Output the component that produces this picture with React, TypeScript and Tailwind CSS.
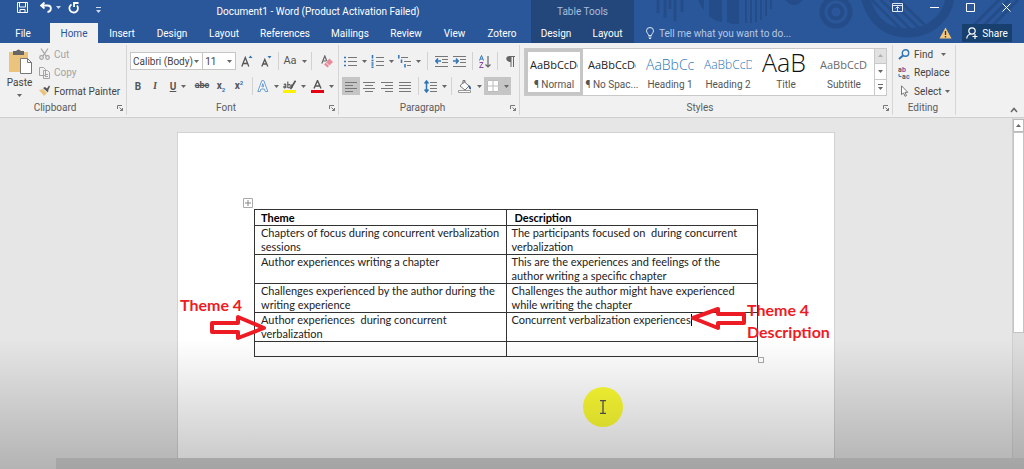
import React, { useState } from "react";

interface ThemeRow {
  theme: string;
  description: string;
  cursor?: boolean;
}

interface StyleItem {
  name: string;
  sample: string;
  className: string;
}

const TABS = [
  { name: "File", className: "w-[50px] pr-1" },
  { name: "Home", className: "w-12" },
  { name: "Insert", className: "w-12" },
  { name: "Design", className: "w-[52px]" },
  { name: "Layout", className: "w-[52px]" },
  { name: "References", className: "w-[70px]" },
  { name: "Mailings", className: "w-[60px]" },
  { name: "Review", className: "w-[52px]" },
  { name: "View", className: "w-[45px]" },
  { name: "Zotero", className: "w-[50px]" },
];

const STYLES: StyleItem[] = [
  { name: "¶ Normal", sample: "AaBbCcDc", className: "text-[11px] leading-[26px] text-[#222]" },
  { name: "¶ No Spac...", sample: "AaBbCcDc", className: "text-[11px] leading-[26px] text-[#222]" },
  { name: "Heading 1", sample: "AaBbCc", className: "text-[14px] leading-[26px] font-light text-[#2e74b5]" },
  { name: "Heading 2", sample: "AaBbCcD", className: "text-[12px] leading-[26px] font-light text-[#2e74b5]" },
  { name: "Title", sample: "AaB", className: "text-[25px] leading-[20px] font-light text-[#111]" },
  { name: "Subtitle", sample: "AaBbCcD", className: "text-[11px] leading-[26px] text-[#6a6a6a]" },
];

const ROWS: ThemeRow[] = [
  {
    theme: "Chapters of focus during concurrent verbalization sessions",
    description: "The participants focused on  during concurrent verbalization",
  },
  {
    theme: "Author experiences writing a chapter",
    description: "This are the experiences and feelings of the author writing a specific chapter",
  },
  {
    theme: "Challenges experienced by the author during the writing experience",
    description: "Challenges the author might have experienced while writing the chapter",
  },
  {
    theme: "Author experiences  during concurrent verbalization",
    description: "Concurrent verbalization experiences",
    cursor: true,
  },
];

function Caret({ className = "" }: { className?: string }) {
  return (
    <svg width="5" height="3" viewBox="0 0 5 3" className={`shrink-0 ${className}`}>
      <path d="M0 0h5L2.500 3z" fill="#666" />
    </svg>
  );
}

function Sep() {
  return <span className="mx-1 h-[18px] w-px shrink-0 bg-[#d2d2d2]" />;
}

function Tool({
  label,
  className = "",
  caret = false,
  children,
}: {
  label: string;
  className?: string;
  caret?: boolean;
  children: React.ReactNode;
}) {
  return (
    <button
      type="button"
      aria-label={label}
      className={`flex h-[18px] shrink-0 items-center justify-center gap-[5px] text-[#555] ${className}`}
    >
      {children}
      {caret && <Caret />}
    </button>
  );
}

function Group({
  name,
  className = "",
  launcher = true,
  children,
}: {
  name: string;
  className?: string;
  launcher?: boolean;
  children: React.ReactNode;
}) {
  return (
    <section className={`my-[2px] flex shrink-0 flex-col border-r border-[#d6d6d6] ${className}`}>
      <div className="h-[58px]">{children}</div>
      <div className="flex h-[14px] items-center">
        <h2 className="flex-1 pr-[7px] text-center leading-[14px] text-[#5c5c5c]">{name}</h2>
        {launcher && (
          <button type="button" aria-label={`${name} settings`} className="mr-[3px]">
            <svg width="6" height="6" viewBox="0 0 6 6" fill="none" stroke="#777">
              <path d="M.5 4V.5H5M2.500 2.500l3 3M5.500 3v2.500H3" />
            </svg>
          </button>
        )}
      </div>
    </section>
  );
}

function Lines({ d, marks }: { d: string; marks?: string }) {
  return (
    <svg width="13" height="13" viewBox="0 0 13 13" fill="none">
      <path d={d} stroke="#777" />
      {marks && <path d={marks} stroke="#2f75b5" strokeWidth="1.500" />}
    </svg>
  );
}

function Backdrop() {
  return (
    <svg
      width="390"
      height="42"
      viewBox="0 0 390 42"
      className="absolute top-0 left-0"
      fill="none"
      stroke="#244c88"
    >
      <path d="M24 0v13M31 0v18M36 0v9M41 0v21M48 0v12" strokeWidth="3" />
      <path d="M64 0h6v10q-4-4-6-10zM75 0h13v22q-8-1-13-6z" fill="#244c88" stroke="none" />
      <path d="M93 0h12v24h-7l-5-2z" fill="#244c88" stroke="none" />
      <path d="M112 0v23M117 0v23M122 0v22M127 0v20M132 0v16M137 0v9" strokeWidth="2" />
      <path d="M151 0q9 10 18 0z" fill="#244c88" stroke="none" />
      <circle cx="202" cy="12" r="14" strokeWidth="5" />
      <circle cx="202" cy="12" r="6.500" strokeWidth="4" />
      <path d="M231 -4c4 18 16 37 42 37s42-19 43-37" strokeWidth="9" />
      <path d="M238 0l30 30M247 0l31 31M256 0l31 30M265 0l29 28" strokeWidth="2.500" />
      <path d="M340 25l25-25M350 25l25-25M359 25l25-25" strokeWidth="3" />
    </svg>
  );
}

function TitleBar() {
  const [active, setActive] = useState("Home");

  return (
    <header className="flex h-[43px] bg-[#2a579a] text-white">
      <div className="flex w-[531px] shrink-0 flex-col">
        <div className="flex h-[23px] items-center">
          <div className="flex w-[105px] items-center pb-2 pl-[17px]">
            <button type="button" aria-label="Save">
              <svg width="11" height="11" viewBox="0 0 11 11" fill="none" stroke="#fff">
                <path d="M.5.5h10v10H.5zM2.500.5V5h6V.5M3 10.500V7.500h5v3" />
              </svg>
            </button>
            <button type="button" aria-label="Undo" className="ml-3 flex items-center gap-1">
              <svg width="12" height="11" viewBox="0 0 12 11" fill="none" stroke="#fff" strokeWidth="1.800">
                <path d="M4.500.5L1 3.500l3.500 3M1 3.500h6.500c4.500 0 4.500 6 0 6.500" />
              </svg>
              <svg width="5" height="3" viewBox="0 0 5 3">
                <path d="M0 0h5L2.500 3z" fill="#cfdaea" />
              </svg>
            </button>
            <button type="button" aria-label="Repeat" className="ml-[7px]">
              <svg width="12" height="12" viewBox="0 0 12 12" fill="none" stroke="#fff" strokeWidth="1.800">
                <path d="M3.500 2.500A4.300 4.300 0 1 0 9 3.500M6 5V1h4.500" />
              </svg>
            </button>
            <button type="button" aria-label="Customize" className="ml-4 pt-1">
              <svg width="5" height="6" viewBox="0 0 5 6" fill="#cfdaea">
                <path d="M0 0h5v1H0zM0 3h5L2.500 6z" />
              </svg>
            </button>
          </div>
          <h1 className="flex-1 text-center whitespace-nowrap">
            Document1 - Word (Product Activation Failed)
          </h1>
        </div>
        <nav className="flex flex-1">
          {TABS.map((tab) => (
            <button
              key={tab.name}
              type="button"
              onClick={() => setActive(tab.name)}
              className={`${tab.className} ${
                active === tab.name ? "bg-[#f1f1f1] text-[#2a579a]" : ""
              }`}
            >
              {tab.name}
            </button>
          ))}
        </nav>
      </div>

      <div className="flex w-[103px] shrink-0 flex-col bg-[#23477a]">
        <p className="flex h-[23px] items-center justify-center text-[#a9bddb]">Table Tools</p>
        <div className="flex flex-1">
          <button type="button" className="w-[50px]">Design</button>
          <button type="button" className="flex-1">Layout</button>
        </div>
      </div>

      <div className="relative flex-1 overflow-hidden">
        <Backdrop />
        <div className="relative flex h-full flex-col">
          <div className="flex h-[23px] items-center justify-end gap-[27px] pr-[13px] pb-2">
            <button type="button" aria-label="Ribbon display options">
              <svg width="11" height="9" viewBox="0 0 11 9" fill="none" stroke="#dfe7f2">
                <path d="M.5.5h10v8H.5zM.5 2.500h10M5.500 8V4M3.500 5.500l2-2 2 2" />
              </svg>
            </button>
            <button type="button" aria-label="Minimize">
              <svg width="9" height="9" viewBox="0 0 9 9" stroke="#fff">
                <path d="M0 4.500h9" />
              </svg>
            </button>
            <button type="button" aria-label="Maximize">
              <svg width="9" height="9" viewBox="0 0 9 9" fill="none" stroke="#fff">
                <path d="M.5.5h8v8h-8z" />
              </svg>
            </button>
            <button type="button" aria-label="Close">
              <svg width="9" height="9" viewBox="0 0 9 9" fill="none" stroke="#fff">
                <path d="M.5.5l8 8M8.500.5l-8 8" />
              </svg>
            </button>
          </div>
          <div className="flex flex-1 items-center pr-3">
            <label htmlFor="tell-me" className="pl-3">
              <svg width="8" height="12" viewBox="0 0 8 12" fill="none" stroke="#dfe7f2" aria-label="Search">
                <path d="M2.500 8.500C2.500 6.500.5 6 .5 3.800a3.500 3.300 0 0 1 7 0C7.500 6 5.500 6.500 5.500 8.500zM2.500 10h3M3 11.500h2" />
              </svg>
            </label>
            <input
              id="tell-me"
              placeholder="Tell me what you want to do..."
              className="ml-[5px] min-w-0 flex-1 bg-transparent outline-none placeholder:text-[#b9c9e2]"
            />
            <svg width="13" height="12" viewBox="0 0 13 12">
              <path d="M6.500.5L12.500 11.500H.5z" fill="#f3c778" />
              <path d="M6.500 4v4M6.500 9v1.500" stroke="#333" strokeWidth="1.300" />
            </svg>
            <button
              type="button"
              className="ml-[10px] flex h-[18px] w-[50px] items-center justify-center gap-1 bg-[#17406f]"
            >
              <svg width="12" height="12" viewBox="0 0 12 12" fill="none" stroke="#fff" strokeWidth="1.200">
                <circle cx="6" cy="4" r="3.200" />
                <path d="M.7 11.500C1 9 2.500 7.500 4.500 7M9 7v5M6.500 9.500h5" />
              </svg>
              Share
            </button>
          </div>
        </div>
      </div>
    </header>
  );
}

function ClipboardGroup() {
  return (
    <Group name="Clipboard" className="w-[127px]">
      <div className="flex h-full">
        <button type="button" className="flex w-[39px] flex-col items-center pt-1">
          <svg width="24" height="25" viewBox="0 0 24 25">
            <path d="M1 3h19v20H1z" fill="#eac47c" />
            <path d="M5 2h3q2.500-3 5 0h3v4H5z" fill="#666" />
            <path d="M12.500 9.500h7l4 4v11h-11z" fill="#fff" stroke="#777" />
            <path d="M19.500 9.500v4h4" fill="none" stroke="#777" />
          </svg>
          <span className="mt-[2px] leading-[14px]">Paste</span>
          <Caret className="mt-1" />
        </button>
        <div className="flex flex-col">
          <button type="button" className="flex h-[18px] items-center gap-1 text-[#a3a3a3]">
            <svg width="11" height="12" viewBox="0 0 11 12" fill="none" stroke="#a3a3a3" strokeWidth="1.200">
              <path d="M2 .5l5 7.500M9 .5L4 8" />
              <circle cx="2.500" cy="9.500" r="1.800" />
              <circle cx="8.500" cy="9.500" r="1.800" />
            </svg>
            Cut
          </button>
          <button type="button" className="flex h-[19px] items-center gap-1 text-[#a3a3a3]">
            <svg width="11" height="12" viewBox="0 0 11 12" fill="#f1f1f1" stroke="#a3a3a3">
              <path d="M.5.5h4l2 2v6h-6zM4.500 3.500h4l2 2v6h-6z" />
              <path d="M6 7.500h3M6 9.500h3" />
            </svg>
            Copy
          </button>
          <button type="button" className="flex h-[18px] items-center gap-1 whitespace-nowrap">
            <svg width="11" height="12" viewBox="0 0 11 12">
              <path d="M0 5l4-1 4 4-3 3z" fill="#eac47c" />
              <path d="M4 3l2-1 2 1.500L10 .5l1 1L9.500 4.500 9 7.500z" fill="#555" />
            </svg>
            Format Painter
          </button>
        </div>
      </div>
    </Group>
  );
}

function FontGroup() {
  return (
    <Group name="Font" className="w-[212px] pl-[3px]">
      <div className="flex h-8 items-center">
        <span className="relative flex h-[18px] w-[76px] items-center">
          <select
            aria-label="Font name"
            className="h-full w-full appearance-none border border-[#c6c6c6] bg-white pl-[2px] text-[#444]"
          >
            <option>Calibri (Body)</option>
          </select>
          <Caret className="pointer-events-none absolute right-1" />
        </span>
        <span className="relative flex h-[18px] w-[34px] items-center">
          <select
            aria-label="Font size"
            className="h-full w-full appearance-none border border-l-0 border-[#c6c6c6] bg-white pl-[2px] text-[#444]"
          >
            <option>11</option>
          </select>
          <Caret className="pointer-events-none absolute right-1" />
        </span>
        <Tool label="Grow font" className="w-[22px]">
          <svg width="12" height="12" viewBox="0 0 12 12" fill="none">
            <path d="M.8 11.500L4.300 2.500l3.500 9M2 8.500h4.600" stroke="#555" strokeWidth="1.300" />
            <path d="M7.500 3L9.500.5l2 2.500z" fill="#2f75b5" />
          </svg>
        </Tool>
        <Tool label="Shrink font" className="w-4">
          <svg width="11" height="12" viewBox="0 0 11 12" fill="none">
            <path d="M.8 11.500l3-7 3 7M1.800 9h4" stroke="#555" strokeWidth="1.300" />
            <path d="M6.500 1h4L8.500 3.500z" fill="#2f75b5" />
          </svg>
        </Tool>
        <Sep />
        <Tool label="Change case" caret className="w-6 text-[11px]">Aa</Tool>
        <Sep />
        <Tool label="Clear formatting" className="w-[22px]">
          <svg width="12" height="13" viewBox="0 0 12 13" fill="none">
            <path d="M.8 8.500l3-7.500 2 5M2 6h3" stroke="#666" strokeWidth="1.200" />
            <path d="M3 9.500l5.500-6L12 7l-5.500 5.500z" fill="#e78a9b" />
            <path d="M5 7.500l3.500 3.500" stroke="#fff" strokeWidth=".8" />
          </svg>
        </Tool>
      </div>
      <div className="flex h-[18px] items-center">
        <Tool label="Bold" className="w-4 font-bold">B</Tool>
        <Tool label="Italic" className="w-[18px] font-serif font-bold italic">I</Tool>
        <Tool label="Underline" caret className="w-7 font-bold">
          <u>U</u>
        </Tool>
        <Tool label="Strikethrough" className="w-5 text-[9px] font-bold">
          <s>abc</s>
        </Tool>
        <Tool label="Subscript" className="w-[18px] font-bold">
          <span>x<span className="align-sub text-[6px] text-[#2f75b5]">2</span></span>
        </Tool>
        <Tool label="Superscript" className="w-[18px] font-bold">
          <span>x<span className="align-super text-[6px] text-[#2f75b5]">2</span></span>
        </Tool>
        <Sep />
        <Tool label="Text effects" caret className="w-[22px]">
          <svg width="12" height="12" viewBox="0 0 12 12" fill="#fff" stroke="#6a9bd0">
            <path d="M.8 11.500L4.800.7h2l4 10.800H8.300L7.500 9H4l-.8 2.500zM4.800 6.800h2L5.800 3.500z" />
          </svg>
        </Tool>
        <Tool label="Highlight" caret className="w-[30px]">
          <svg width="13" height="13" viewBox="0 0 13 13" fill="none">
            <path d="M0 10h13v3H0z" fill="#fff200" />
            <path d="M.8 4.500q2-1 2 .5v3M2.800 6q-2.300 0-2 1.200t2 .3M4.800 1.500v6.500M4.800 5q2.500-1.500 2.500 1T4.800 7.500M8.500 4.500l1 3" stroke="#555" strokeWidth="1.100" />
            <path d="M12.500.8L7.500 9" stroke="#555" strokeWidth="1.700" />
          </svg>
        </Tool>
        <Tool label="Font color" caret className="w-[26px]">
          <svg width="13" height="13" viewBox="0 0 13 13" fill="none">
            <path d="M0 10h13v3H0z" fill="#e60012" />
            <path d="M3 8.500l3.500-8 3.500 8M4.200 6h4.600" stroke="#555" strokeWidth="1.400" />
          </svg>
        </Tool>
      </div>
    </Group>
  );
}

function ParagraphGroup() {
  return (
    <Group name="Paragraph" className="w-[181px] pl-[3px]">
      <div className="flex h-8 items-center">
        <Tool label="Bullets" caret className="w-[27px]">
          <Lines d="M4 2.500h9M4 6.500h9M4 10.500h9" marks="M0 2.500h2M0 6.500h2M0 10.500h2" />
        </Tool>
        <Tool label="Numbering" caret className="w-[27px]">
          <Lines d="M5 2.500h8M5 6.500h8M5 10.500h8" marks="M1.500 0v3.500M.5 5.500h2M.5 8h2M.5 10h2M.5 12.300h2" />
        </Tool>
        <Tool label="Multilevel list" caret className="w-[27px]">
          <Lines d="M3 2.500h7M6 6.500h7M9 10.500h4" marks="M.8 0v3.500M3.500 4.500v3.500M7 9v3.500" />
        </Tool>
        <Sep />
        <Tool label="Decrease indent" className="w-[18px]">
          <Lines d="M0 1.500h13M7 4.500h6M7 7.500h6M0 11.500h13" marks="M6 6H1M3 3.500L.8 6 3 8.500" />
        </Tool>
        <Tool label="Increase indent" className="w-[18px]">
          <Lines d="M0 1.500h13M7 4.500h6M7 7.500h6M0 11.500h13" marks="M0 6h5M3 3.500L5.200 6 3 8.500" />
        </Tool>
        <Sep />
        <Tool label="Sort" className="w-4">
          <svg width="12" height="13" viewBox="0 0 12 13" fill="none">
            <path d="M.5 5.500l2-5 2 5M1.200 4h2.600" stroke="#2f75b5" />
            <path d="M.5 7.500h3.500L.5 12.500h4" stroke="#8a4ba8" />
            <path d="M9 1v11M6.500 9.500L9 12l2.500-2.500" stroke="#666" strokeWidth="1.200" />
          </svg>
        </Tool>
        <Sep />
        <Tool label="Show marks" className="w-4">
          <svg width="9" height="11" viewBox="0 0 9 11">
            <path d="M3.500 0H9v1H8v10H7V1H5.500v10h-1V6C-1 6-1 0 3.500 0z" fill="#666" />
          </svg>
        </Tool>
      </div>
      <div className="flex h-[18px] items-center">
        <Tool label="Align left" className="w-[18px] bg-[#c5c5c5]">
          <Lines d="M0 2.500h12M0 5.500h8M0 8.500h12M0 11.500h8" />
        </Tool>
        <Tool label="Center" className="w-[18px]">
          <Lines d="M0 2.500h12M2 5.500h8M0 8.500h12M2 11.500h8" />
        </Tool>
        <Tool label="Align right" className="w-[18px]">
          <Lines d="M0 2.500h12M4 5.500h8M0 8.500h12M4 11.500h8" />
        </Tool>
        <Tool label="Justify" className="w-[18px]">
          <Lines d="M0 2.500h12M0 5.500h12M0 8.500h12M0 11.500h12" />
        </Tool>
        <Sep />
        <Tool label="Line spacing" caret className="w-6">
          <Lines d="M6 2.500h7M6 5.500h7M6 8.500h7M6 11.500h7" marks="M2.500 1v11M.5 3.500l2-2.500 2 2.500M.5 9.500l2 2.500 2-2.500" />
        </Tool>
        <Sep />
        <Tool label="Shading" caret className="w-[28px]">
          <svg width="14" height="13" viewBox="0 0 14 13">
            <path d="M6 1.500l5 4.500-4 4-5-4z" fill="#fff" stroke="#777" />
            <path d="M5 4V.5h2V3" fill="none" stroke="#777" />
            <path d="M10.500 5q3 1 2.500 4.500l-2-1z" fill="#2f5f93" />
            <path d="M.5 10.500h12v2H.5z" fill="#fff" stroke="#999" />
          </svg>
        </Tool>
        <Tool label="Borders" caret className="w-[27px] bg-[#c5c5c5]">
          <svg width="12" height="12" viewBox="0 0 12 12">
            <path d="M0 0h12v12H0z" fill="#fff" />
            <path d="M.5.5h11v11H.5zM6 0v12M0 6h12" fill="none" stroke="#bbb" />
          </svg>
        </Tool>
      </div>
    </Group>
  );
}

function StylesGroup() {
  const [selected, setSelected] = useState("¶ Normal");

  return (
    <Group name="Styles" className="w-[373px] pl-1">
      <div className="flex h-full items-center pb-[3px]">
        <div className="flex h-12 w-[363px] border border-[#c9c9c9] bg-white">
          <div className="flex flex-1">
            {STYLES.map((item) => (
              <button
                key={item.name}
                type="button"
                onClick={() => setSelected(item.name)}
                className={`flex w-[58px] flex-col items-center border-[3px] ${
                  selected === item.name ? "border-[#c6c6c6]" : "border-transparent"
                }`}
              >
                <span
                  className={`h-[26px] w-12 overflow-hidden text-left font-['Open_Sans','Segoe_UI',sans-serif] whitespace-nowrap ${item.className}`}
                >
                  {item.sample}
                </span>
                <span className="leading-[14px] whitespace-nowrap text-[#555]">{item.name}</span>
              </button>
            ))}
          </div>
          <div className="flex w-3 flex-col border-l border-[#c9c9c9]">
            <button type="button" aria-label="Scroll up" className="flex flex-1 items-center justify-center bg-[#e1e1e1]">
              <Caret className="rotate-180 opacity-40" />
            </button>
            <button type="button" aria-label="Scroll down" className="flex flex-1 items-center justify-center border-y border-[#c9c9c9]">
              <Caret />
            </button>
            <button type="button" aria-label="More styles" className="flex flex-1 items-center justify-center">
              <svg width="5" height="6" viewBox="0 0 5 6" fill="#666">
                <path d="M0 0h5v1H0zM0 3h5L2.500 6z" />
              </svg>
            </button>
          </div>
        </div>
      </div>
    </Group>
  );
}

function EditingGroup() {
  return (
    <Group name="Editing" className="w-[63px] pl-[5px]" launcher={false}>
      <button type="button" className="flex h-[18px] items-center gap-1">
        <svg width="12" height="11" viewBox="0 0 12 11" fill="none" stroke="#2f75b5" strokeWidth="1.400">
          <circle cx="7.500" cy="4" r="3.200" />
          <path d="M5 6.500L1 10" strokeWidth="2" />
        </svg>
        Find
        <Caret className="ml-1" />
      </button>
      <button type="button" className="flex h-[19px] items-center gap-1 whitespace-nowrap">
        <svg width="12" height="12" viewBox="0 0 12 12" fontSize="7" fontWeight="700">
          <text x="0" y="5" fill="#555">a</text>
          <text x="4" y="5" fill="#8a4ba8">b</text>
          <text x="4" y="12" fill="#555">a</text>
          <text x="8" y="12" fill="#2f75b5">c</text>
          <path d="M1 7v2.500h2.500" fill="none" stroke="#2f75b5" />
        </svg>
        Replace
      </button>
      <button type="button" className="flex h-[18px] items-center gap-1">
        <svg width="12" height="12" viewBox="0 0 12 12" fill="#fff" stroke="#777">
          <path d="M3.500.8v9l2-2 1.500 3.500 1.500-.7L7 7.300h2.800z" />
        </svg>
        Select
        <Caret />
      </button>
    </Group>
  );
}

function ThemeTable() {
  return (
    <table className="w-full table-fixed border-collapse text-left font-[Lato,Calibri,sans-serif] text-[11px] leading-[14px] text-[#222]">
      <thead>
        <tr className="h-4">
          <th className="border border-[#333] px-[6px] py-0 font-bold text-black">Theme</th>
          <th className="border border-[#333] px-2 py-0 font-bold text-black">Description</th>
        </tr>
      </thead>
      <tbody>
        {ROWS.map((row) => (
          <tr key={row.theme} className="h-[29px] align-top whitespace-pre-wrap">
            <td className="border border-[#333] px-[6px] py-0">{row.theme}</td>
            <td className="border border-[#333] px-[5px] py-0">
              {row.description}
              {row.cursor && <span className="inline-block h-3 w-px bg-black align-text-bottom" />}
            </td>
          </tr>
        ))}
        <tr className="h-[15px]">
          <td className="border border-[#333] p-0" />
          <td className="border border-[#333] p-0" />
        </tr>
      </tbody>
    </table>
  );
}

function Annotations() {
  return (
    <div className="font-[Lato,Calibri,sans-serif] text-[16px] leading-[22px] font-bold text-[#ed1c24]">
      <p className="absolute top-[161px] left-[2px]">Theme 4</p>
      <svg
        width="58"
        height="28"
        viewBox="0 0 58 28"
        className="absolute top-[181px] left-8"
        fill="none"
        stroke="#ed1c24"
        strokeWidth="4"
        strokeLinejoin="round"
      >
        <path d="M2 9h26V3l26 11-26 10v-6H2z" />
      </svg>
      <svg
        width="58"
        height="26"
        viewBox="0 0 58 26"
        className="absolute top-[173px] left-[512px]"
        fill="none"
        stroke="#ed1c24"
        strokeWidth="4"
        strokeLinejoin="round"
      >
        <path d="M54 8H28V3L3 12l25 10v-5h26z" />
      </svg>
      <p className="absolute top-[166px] left-[569px]">
        Theme 4<br />
        Description
      </p>
    </div>
  );
}

export default function App() {
  return (
    <div className="flex min-h-screen flex-col overflow-hidden bg-[#e6e6e6] font-[Roboto,'Segoe_UI',sans-serif] text-[10px] text-[#444]">
      <TitleBar />

      {/* Ribbon */}
      <div className="flex h-[75px] border-b border-[#d0d0d0] bg-[#f1f1f1]">
        <ClipboardGroup />
        <FontGroup />
        <ParagraphGroup />
        <StylesGroup />
        <EditingGroup />
        <div className="flex flex-1 items-end justify-end pr-[6px] pb-1">
          <button type="button" aria-label="Collapse ribbon">
            <svg width="8" height="6" viewBox="0 0 8 6" fill="none" stroke="#666" strokeWidth="1.500">
              <path d="M1 5l3-3.500L7 5" />
            </svg>
          </button>
        </div>
      </div>

      {/* Document */}
      <main className="relative flex flex-1 flex-col">
        <div className="flex flex-1">
          <div className="flex flex-1 justify-center pt-[14px]">
            <article className="relative w-[658px] border border-b-0 border-[#d2d2d2] bg-white px-[76px] pt-[76px]">
              <div className="relative">
                <svg
                  width="10"
                  height="10"
                  viewBox="0 0 10 10"
                  className="absolute -top-[11px] -left-[11px]"
                  fill="#fff"
                  stroke="#888"
                >
                  <path d="M.5.5h9v9h-9z" stroke="#aaa" />
                  <path d="M5 2v6M2 5h6" />
                </svg>
                <ThemeTable />
                <span className="absolute -right-[6px] -bottom-[6px] size-[6px] border border-[#aaa] bg-white" />
              </div>
              <Annotations />
              <div className="absolute top-[254px] left-[405px] flex size-10 items-center justify-center rounded-full bg-[#ffff34]">
                <svg width="8" height="14" viewBox="0 0 8 14" fill="none" stroke="#555" strokeWidth="1.300">
                  <path d="M1 .7h6M4 .7v12.600M1 13.300h6" />
                </svg>
              </div>
            </article>
          </div>
          <div className="flex w-3 flex-col border-l border-[#d0d0d0] bg-[#dedede] pt-px">
            <button
              type="button"
              aria-label="Scroll page up"
              className="flex h-[13px] items-center justify-center border border-[#bbb] bg-white"
            >
              <Caret className="rotate-180" />
            </button>
            <div className="h-[201px] border border-[#c4c4c4] bg-white" />
          </div>
        </div>
        <div className="ml-14 h-[11px] bg-[#d2d2d2]" />
        <div className="pointer-events-none absolute inset-x-0 bottom-0 h-[130px] bg-linear-to-b from-transparent to-black/22" />
      </main>
    </div>
  );
}
